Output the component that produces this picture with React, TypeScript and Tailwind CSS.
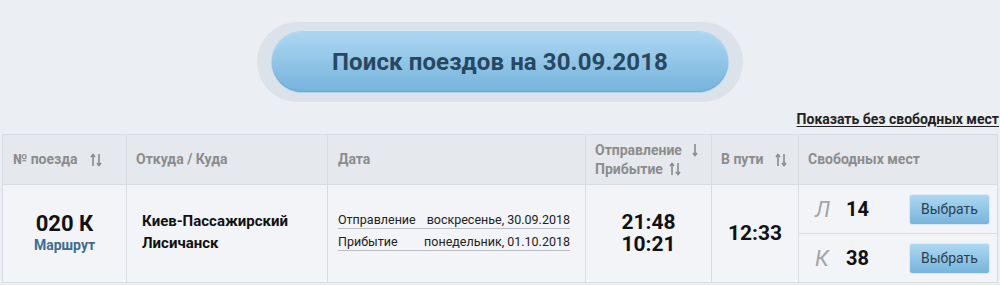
import { ReactNode } from "react";

function SortIcon({ single }: { single?: boolean }) {
  return (
    <svg width="12" height="14" viewBox="0 0 12 14" className="inline-block">
      {!single && (
        <g stroke="#8a8a8a" strokeWidth="1.6" fill="none">
          <path d="M3 13V2" />
          <path d="M1 4l2-2.5L5 4" />
        </g>
      )}
      <g stroke="#8a8a8a" strokeWidth="1.6" fill="none">
        <path d="M9 1v11" />
        <path d="M7 10l2 2.5L11 10" />
      </g>
    </svg>
  );
}

function HeadCell({ children, className = "" }: { children: ReactNode; className?: string }) {
  return (
    <div className={`flex items-center px-[10px] text-[14px] font-bold text-[#8c8c8c] border-r border-[#d9dde3] ${className}`}>
      {children}
    </div>
  );
}

function SeatRow({ type, count, first }: { type: string; count: number; first?: boolean }) {
  return (
    <div className={`flex items-center pl-[16px] pr-[8px] ${first ? "h-[49px] border-b border-[#d9dde3]" : "flex-1"}`}>
      <span className="w-[31px] text-[22px] italic text-[#a4a4a4]">{type}</span>
      <span className="text-[20px] font-bold text-[#111]">{count}</span>
      <button className="ml-auto w-[79px] h-[29px] rounded-[2px] bg-gradient-to-b from-[#acd8f2] to-[#77b4dc] text-[14px] text-[#2c3e4e] shadow-[0_0_0_1px_#dbe9f4]">
        Выбрать
      </button>
    </div>
  );
}

export default function App() {
  return (
    <div className="w-[1000px] h-[285px] bg-[#ebeef2] font-['Roboto',sans-serif] overflow-hidden">
      <div className="flex justify-center pt-[22px]">
        <div className="w-[486px] h-[80px] rounded-full bg-[#dce2e9] flex items-center justify-center">
          <div className="w-[456px] h-[60px] rounded-full bg-gradient-to-b from-[#acd7f1] to-[#76b3dc] shadow-[inset_0_-1px_0_#6aa6d0,0_0_0_1px_#b5d3ea] flex items-center justify-center text-[24px] font-bold text-[#284760] tracking-[0.1px]">
            Поиск поездов на 30.09.2018
          </div>
        </div>
      </div>

      <div className="flex justify-end items-center h-[32px] pt-[2px] pr-[1px]">
        <a className="text-[14px] font-bold text-[#222] underline underline-offset-2">Показать без свободных мест</a>
      </div>

      <div className="ml-[2px] w-[996px] border-t border-l border-[#d9dde3]">
        <div className="flex h-[50px] bg-[#e5e8ec] border-b border-[#d9dde3]">
          <HeadCell className="w-[124px] gap-[12px]">
            № поезда <SortIcon />
          </HeadCell>
          <HeadCell className="w-[201px] pl-[9px]">Откуда / Куда</HeadCell>
          <HeadCell className="w-[258px]">Дата</HeadCell>
          <HeadCell className="w-[126px] pl-[9px]">
            <div className="flex flex-col gap-[3px] leading-[16px]">
              <div className="flex items-center gap-[4px]">Отправление <SortIcon single /></div>
              <div className="flex items-center gap-[6px]">Прибытие <SortIcon /></div>
            </div>
          </HeadCell>
          <HeadCell className="w-[87px] pl-[9px] gap-[12px]">
            В пути <SortIcon />
          </HeadCell>
          <HeadCell className="flex-1 pl-[9px]">Свободных мест</HeadCell>
        </div>

        <div className="flex h-[98px] bg-[#f2f4f8] border-b border-[#d9dde3]">
          <div className="w-[124px] border-r border-[#d9dde3] pt-[27px] text-center">
            <div className="text-[22px] font-bold text-[#111] leading-[24px]">020 К</div>
            <div className="text-[14px] font-bold text-[#3d6e8f] leading-[18px]">Маршрут</div>
          </div>
          <div className="w-[201px] border-r border-[#d9dde3] pl-[15px] pt-[25px] text-[15px] font-bold text-[#111] leading-[22px]">
            <div>Киев-Пассажирский</div>
            <div>Лисичанск</div>
          </div>
          <div className="w-[258px] border-r border-[#d9dde3] pl-[10px] pr-[15px] pt-[22px] text-[12.5px] leading-[14px] text-[#222] whitespace-nowrap">
            <div className="flex justify-between items-end border-b border-[#b9bec6] h-[22px] pb-[1px]">
              <span>Отправление</span>
              <span>воскресенье, 30.09.2018</span>
            </div>
            <div className="flex justify-between items-end border-b border-[#b9bec6] h-[22px] pb-[1px]">
              <span>Прибытие</span>
              <span>понедельник, 01.10.2018</span>
            </div>
          </div>
          <div className="w-[126px] border-r border-[#d9dde3] pt-[26px] text-center text-[21px] font-bold text-[#111] leading-[22px]">
            <div>21:48</div>
            <div>10:21</div>
          </div>
          <div className="w-[87px] border-r border-[#d9dde3] flex items-center justify-center text-[21px] font-bold text-[#111]">
            12:33
          </div>
          <div className="flex-1 flex flex-col border-r border-[#d9dde3]">
            <SeatRow type="Л" count={14} first />
            <SeatRow type="К" count={38} />
          </div>
        </div>
      </div>
    </div>
  );
}
